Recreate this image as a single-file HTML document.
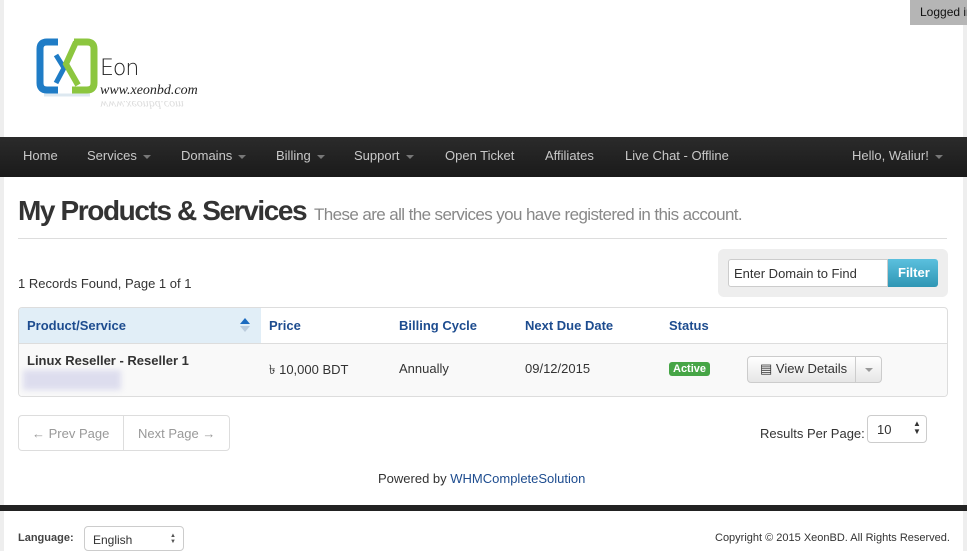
<!DOCTYPE html>
<html><head><meta charset="utf-8"><style>
*{box-sizing:border-box;margin:0;padding:0}
body{width:967px;height:551px;overflow:hidden;background:#eee;font-family:"Liberation Sans",Arial,sans-serif;font-size:13px;color:#333;position:relative}
.wrap{position:absolute;left:4px;top:0;width:959px;height:551px;background:#fff}
.logged{position:absolute;left:910px;top:0;width:57px;height:25px;background:#b5b5b5;font-size:12px;color:#111;padding:5px 0 0 10px;white-space:nowrap;overflow:hidden;z-index:3}
.nav{position:absolute;left:0;top:137px;width:967px;height:40px;background:linear-gradient(#2b2b2b,#1a1a1a);z-index:2}
.nav span{position:absolute;top:11px;color:#c8c8c8;font-size:13px;white-space:nowrap}
.car{display:inline-block;border-left:4px solid transparent;border-right:4px solid transparent;border-top:4px solid #777;vertical-align:middle;margin-left:6px}
.abs{position:absolute;white-space:nowrap}
.hdr{position:absolute;left:18px;top:307px;width:930px;height:90px;border:1px solid #ddd;border-radius:4px;overflow:hidden}
.blue{color:#1d4c8f;font-weight:bold;font-size:13px}
.bar{position:absolute;left:0;top:505px;width:967px;height:6px;background:#222;z-index:2}
.sel{position:absolute;border:1px solid #ccc;border-radius:4px;background:#fff}
</style></head><body>
<div class="wrap">
<svg class="abs" style="left:32px;top:38px" width="66" height="62" viewBox="0 0 66 62">
<path d="M22 4 H11 Q4 4 4 11 V45 Q4 52 11 52 H22" fill="none" stroke="#1f7cc6" stroke-width="7"/>
<path d="M38 4 H51 Q58 4 58 11 V45 Q58 52 51 52 H36" fill="none" stroke="#8cc63f" stroke-width="7"/>
<path d="M20 17 L28 30 L20 45" fill="none" stroke="#1f7cc6" stroke-width="5"/>
<path d="M40 4 L30 26 L42 47" fill="none" stroke="#8cc63f" stroke-width="6"/>
<path d="M8 57 H54" stroke="#dde8f0" stroke-width="3"/>
</svg>
<div class="abs" style="left:96px;top:56px;font-family:'DejaVu Sans',sans-serif;font-weight:200;font-size:22px;color:#222;letter-spacing:-1px">Eon</div>
<div class="abs" style="left:96px;top:83px;font-family:'Liberation Serif',serif;font-style:italic;font-size:14px;color:#222">www.xeonbd.com</div>
<div class="abs" style="left:96px;top:97px;font-family:'Liberation Serif',serif;font-style:italic;font-size:12px;color:#ddd;transform:scaleY(-1)">www.xeonbd.com</div>

<div class="abs" style="left:14px;top:195px;font-size:28px;font-weight:bold;letter-spacing:-1.4px;color:#333">My Products &amp; Services</div>
<div class="abs" style="left:310px;top:205px;font-size:17px;color:#888;letter-spacing:-0.6px">These are all the services you have registered in this account.</div>
<div class="abs" style="left:14px;top:238px;width:929px;height:1px;background:#ddd"></div>
<div class="abs" style="left:14px;top:276px">1 Records Found, Page 1 of 1</div>
<div class="abs" style="left:714px;top:249px;width:230px;height:48px;background:#eee;border-radius:6px"></div>
<div class="abs" style="left:724px;top:259px;width:160px;height:28px;border:1px solid #ccc;border-radius:3px 0 0 3px;background:#fff;padding:6px 0 0 5px">Enter Domain to Find</div>
<div class="abs" style="left:884px;top:259px;width:50px;height:28px;background:linear-gradient(#5bc0de,#2f96b4);border-radius:0 3px 3px 0;color:#fff;font-weight:bold;padding:6px 0 0 10px">Filter</div>
</div>
<div class="logged">Logged in</div>
<div class="nav">
<span style="left:23px">Home</span>
<span style="left:87px">Services<i class="car"></i></span>
<span style="left:181px">Domains<i class="car"></i></span>
<span style="left:276px">Billing<i class="car"></i></span>
<span style="left:354px">Support<i class="car"></i></span>
<span style="left:445px">Open Ticket</span>
<span style="left:545px">Affiliates</span>
<span style="left:625px">Live Chat - Offline</span>
<span style="left:852px">Hello, Waliur!<i class="car"></i></span>
</div>
<div class="hdr">
<div class="abs" style="left:0;top:0;width:242px;height:35px;background:#e1eef7"></div>
<div class="abs" style="left:0;top:35px;width:930px;height:1px;background:#ddd"></div>
<div class="abs" style="left:0;top:36px;width:930px;height:54px;background:#f9f9f9"></div>
<div class="abs blue" style="left:8px;top:10px">Product/Service</div>
<div class="abs" style="left:221px;top:10px;border:5px solid transparent;border-bottom:6px solid #1d6bbf;border-top:0"></div>
<div class="abs" style="left:221px;top:18px;border:5px solid transparent;border-top:6px solid #bcd;border-bottom:0"></div>
<div class="abs blue" style="left:250px;top:10px">Price</div>
<div class="abs blue" style="left:380px;top:10px">Billing Cycle</div>
<div class="abs blue" style="left:506px;top:10px">Next Due Date</div>
<div class="abs blue" style="left:650px;top:10px">Status</div>
<div class="abs" style="left:8px;top:45px;font-weight:bold">Linux Reseller - Reseller 1</div>
<div class="abs" style="left:4px;top:62px;width:98px;height:20px;background:#dde;filter:blur(3px)"></div>
<div class="abs" style="left:250px;top:53px">৳ 10,000 BDT</div>
<div class="abs" style="left:380px;top:53px">Annually</div>
<div class="abs" style="left:506px;top:53px">09/12/2015</div>
<div class="abs" style="left:650px;top:54px;background:#46a546;color:#fff;font-weight:bold;font-size:11px;padding:1px 4px;border-radius:3px">Active</div>
<div class="abs" style="left:728px;top:48px;width:135px;height:27px;border:1px solid #ccc;border-radius:4px;background:linear-gradient(#fff,#e6e6e6)"></div>
<div class="abs" style="left:836px;top:48px;width:1px;height:27px;background:#ccc"></div>
<div class="abs" style="left:741px;top:53px;font-size:13px">▤ View Details</div>
<div class="abs" style="left:846px;top:60px;border:4px solid transparent;border-top:4px solid #999"></div>
</div>
<div class="abs" style="left:18px;top:415px;width:212px;height:36px;border:1px solid #ddd;border-radius:4px;color:#999;font-size:13px"><span class="abs" style="left:13px;top:10px">← Prev Page</span><span class="abs" style="left:104px;top:0;width:1px;height:34px;background:#ddd"></span><span class="abs" style="left:119px;top:10px">Next Page →</span></div>
<div class="abs" style="left:760px;top:426px">Results Per Page:</div>
<div class="sel" style="left:867px;top:415px;width:60px;height:28px"><span class="abs" style="left:9px;top:6px">10</span><span class="abs" style="left:45px;top:4px;font-size:8px;line-height:8px">▲<br>▼</span></div>
<div class="abs" style="left:378px;top:471px">Powered by <span style="color:#1d4c8f">WHMCompleteSolution</span></div>
<div class="bar"></div>
<div class="abs" style="left:18px;top:532px;font-size:11px;font-weight:bold;color:#444">Language:</div>
<div class="sel" style="left:84px;top:526px;width:100px;height:25px;font-size:12px"><span class="abs" style="left:8px;top:6px">English</span><span class="abs" style="left:85px;top:6px;font-size:6px;line-height:6px;color:#555">▲<br>▼</span></div>
<div class="abs" style="left:715px;top:532px;font-size:11px;color:#333">Copyright © 2015 XeonBD. All Rights Reserved.</div>
</body></html>
